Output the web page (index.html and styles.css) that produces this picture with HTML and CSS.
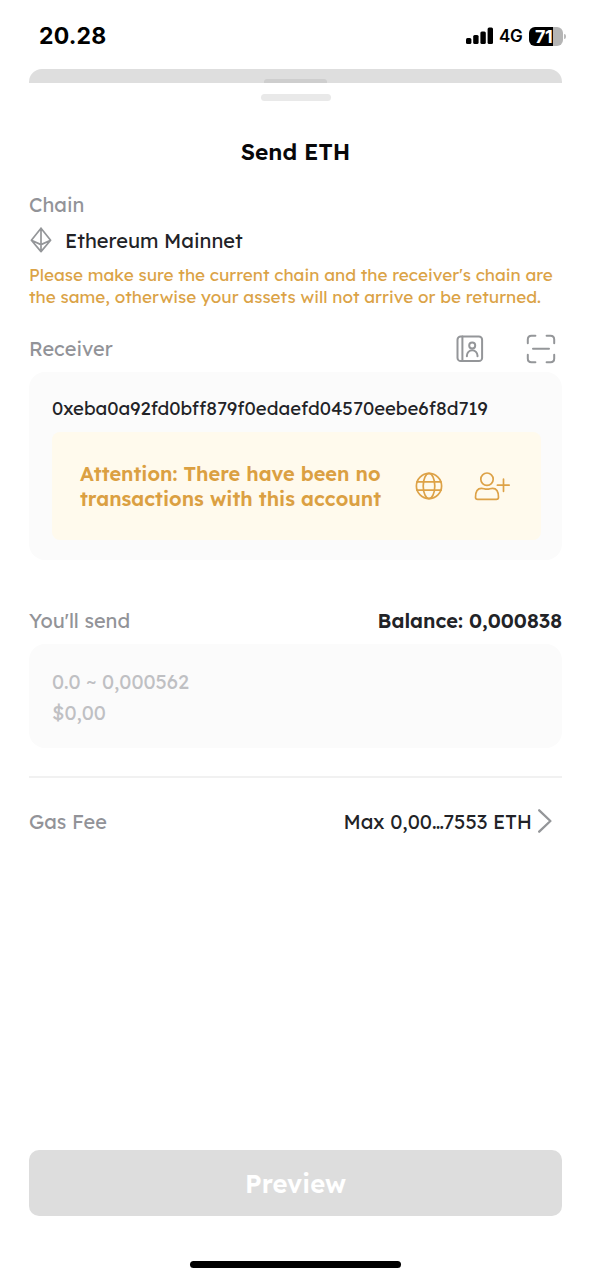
FILE: index.html
```html
<!DOCTYPE html>
<html lang="en">
<head>
<meta charset="utf-8">
<title>Send ETH</title>
<link rel="stylesheet" href="styles.css">
</head>
<body>
<div class="screen">
  <header class="status-bar">
    <span class="time">20.28</span>
    <div class="indicators">
      <svg class="signal" width="28" height="18" viewBox="0 0 28 18"><rect x="0" y="11" width="5.4" height="6" rx="1.5"/><rect x="7.2" y="8" width="5.4" height="9" rx="1.5"/><rect x="14.4" y="4.5" width="5.4" height="12.5" rx="1.5"/><rect x="21.6" y="0.6" width="5.4" height="16.4" rx="1.5"/></svg>
      <span class="network">4G</span>
      <div class="battery"><span class="battery-level">71</span></div>
      <span class="battery-tip"></span>
    </div>
  </header>
  <div class="back-sheet"><span class="back-handle"></span></div>
  <main class="sheet">
    <span class="handle"></span>
    <h1 class="title">Send ETH</h1>
    <section class="chain">
      <div class="label chain-label">Chain</div>
      <div class="chain-row">
        <svg width="24" height="26" viewBox="0 0 24 26" class="line-icon eth"><path d="M12 1.2 21.6 13.3 12 24.6 2.4 13.3ZM12 1.2V17.6M2.4 13.3 12 17.6 21.6 13.3M12 17.6V24.6"/></svg>
        <span class="chain-name">Ethereum Mainnet</span>
      </div>
      <p class="warning">Please make sure the current chain and the receiver's chain are<br>the same, otherwise your assets will not arrive or be returned.</p>
    </section>
    <div class="receiver-head">
      <span class="label">Receiver</span>
      <div class="receiver-tools">
        <svg width="28" height="28" viewBox="0 0 28 28" class="line-icon"><rect x="1.5" y="1.5" width="24.6" height="24.6" rx="3.2"/><path d="M6.4 1.5V26.1M10.9 21.2V20.6a5.3 5.3 0 0 1 10.6 0V21.2"/><circle cx="16.2" cy="10.4" r="3"/></svg>
        <svg width="30" height="30" viewBox="0 0 30 30" class="line-icon"><path d="M1.8 9.2V5.5Q1.8 1.8 5.5 1.8H9.4M20.6 1.8H24.5Q28.2 1.8 28.2 5.5V9.2M28.2 20.8V24.5Q28.2 28.2 24.5 28.2H20.6M9.4 28.2H5.5Q1.8 28.2 1.8 24.5V20.8M7 14.7H23"/></svg>
      </div>
    </div>
    <section class="card receiver-card">
      <div class="address">0xeba0a92fd0bff879f0edaefd04570eebe6f8d719</div>
      <div class="alert">
        <p class="alert-text">Attention: There have been no<br>transactions with this account</p>
        <svg width="28" height="28" viewBox="0 0 28 28" class="gold-icon globe"><circle cx="14" cy="14" r="12.6"/><ellipse cx="14" cy="14" rx="5.8" ry="12.6"/><path d="M2 9.8H26M2 18.2H26"/></svg>
        <svg width="36" height="30" viewBox="0 0 36 30" class="gold-icon"><circle cx="13" cy="8.2" r="6.2"/><path d="M1.5 26.2C1.5 20.2 3.5 17.3 7.4 17.3C9.8 17.3 10.2 18.2 13 18.2S16.2 17.3 18.6 17.3C22.5 17.3 24.5 20.2 24.5 26.2Q24.5 28.4 22.3 28.4H3.7Q1.5 28.4 1.5 26.2ZM29.5 8.2V20.3M23.4 14.2H35.2"/></svg>
      </div>
    </section>
    <div class="send-head">
      <span class="label">You'll send</span>
      <span class="balance">Balance: 0,000838</span>
    </div>
    <section class="card amount-card">
      <div class="amount">0.0 ~ 0,000562</div>
      <div class="fiat">$0,00</div>
    </section>
    <div class="gas-row">
      <span class="label">Gas Fee</span>
      <span class="gas-value">Max 0,00<span class="dots">...</span>7553 ETH</span>
      <svg width="14" height="24" viewBox="0 0 14 24" class="line-icon chevron"><path d="M1.2 1.3 12.4 12 1.2 22.7"/></svg>
    </div>
    <button class="preview">Preview</button>
    <span class="home-indicator"></span>
  </main>
</div>
</body>
</html>
```
FILE: styles.css
```css
* { box-sizing: border-box; }
body {
  margin: 0;
  background: #fff;
  color: #222327;
  font-family: Lexend, Inter, "Open Sans", sans-serif;
  font-size: 20px;
}
h1, p { margin: 0; }
svg { display: block; flex: none; }
.screen { width: 591px; height: 1280px; overflow: hidden; display: flex; flex-direction: column; white-space: nowrap; }
.status-bar { height: 69px; padding: 3px 25px 0 39px; display: flex; align-items: center; justify-content: space-between; color: #000; font-family: Inter, sans-serif; }
.time { font-size: 23px; font-weight: 700; letter-spacing: 0.2px; }
.indicators { display: flex; align-items: center; }
.signal { fill: #000; margin-right: 5px; }
.network { font-size: 17px; font-weight: 600; width: 30px; letter-spacing: -0.3px; }
.battery { width: 34px; height: 19px; border-radius: 6px; background: linear-gradient(90deg, #000 24.5px, #b5b5b5 24.5px); color: #fff; padding-left: 6px; line-height: 19px; }
.battery-level { display: block; font-size: 18px; font-weight: 700; letter-spacing: -0.5px; }
.battery-tip { width: 2px; height: 5px; margin-left: 1px; border-radius: 0 2px 2px 0; background: #bbb; }
.back-sheet { height: 14px; margin: 0 29px; border-radius: 13px 13px 0 0; background: #dedede; display: flex; justify-content: center; align-items: flex-end; }
.back-handle { width: 63px; height: 4px; border-radius: 3px 3px 0 0; background: #cecece; }
.sheet { flex: 1; padding: 11px 29px 0; display: flex; flex-direction: column; }
.handle { align-self: center; width: 70px; height: 7px; border-radius: 4px; background: #e9e9e9; }
.title { margin-top: 36px; height: 30px; line-height: 30px; font-size: 22.7px; font-weight: 600; text-align: center; color: #08080a; }
.label { color: #929398; font-size: 19.9px; }
.chain-label { margin-top: 26px; height: 24px; line-height: 24px; }
.chain-row { margin-top: 10px; height: 26px; display: flex; align-items: center; gap: 12px; }
.line-icon { fill: none; stroke: #949699; stroke-width: 2; stroke-linecap: round; stroke-linejoin: round; }
.eth { stroke-width: 1.7; }
.warning { margin-top: 11px; line-height: 21.5px; font-size: 17.1px; color: #dba347; }
.receiver-head { margin-top: 26px; height: 30px; display: flex; align-items: center; justify-content: space-between; }
.receiver-tools { display: flex; align-items: center; gap: 42px; padding: 1px 6px 0 0; }
.card { background: #fbfbfb; border-radius: 16px; }
.receiver-card { margin-top: 9px; height: 188px; padding: 24px 21px 0 23px; }
.address { height: 25px; line-height: 25px; font-size: 18.53px; }
.alert { margin-top: 11px; height: 108px; border-radius: 8px; padding: 0 30px 0 28px; background: #fffaed; display: flex; align-items: center; }
.alert-text { width: 335px; flex: none; line-height: 25px; font-size: 19.95px; font-weight: 600; color: #dba042; }
.gold-icon { fill: none; stroke: #dda247; stroke-width: 1.7; stroke-linecap: round; stroke-linejoin: round; }
.globe { margin-right: 31px; }
.send-head { margin-top: 46px; height: 28px; display: flex; align-items: center; justify-content: space-between; }
.balance { font-weight: 600; }
.amount-card { margin-top: 10px; height: 104px; padding: 22px 23px; color: #bfc0c3; font-size: 19.9px; }
.amount, .fiat { height: 31px; line-height: 31px; }
.gas-row { margin-top: 28px; height: 88px; border-top: 2px solid #f1f1f1; display: flex; align-items: center; padding-right: 10px; }
.gas-value { margin-left: auto; margin-right: 6px; }
.dots { letter-spacing: -0.8px; }
.chevron { stroke-width: 2.3; }
.preview { margin-top: 286px; height: 66px; flex: none; border: 0; border-radius: 10px; background: #ddd; color: #fff; font: inherit; font-size: 25.6px; font-weight: 600; }
.home-indicator { align-self: center; width: 211px; height: 7px; margin-top: 45px; border-radius: 4px; background: #000; }
```
